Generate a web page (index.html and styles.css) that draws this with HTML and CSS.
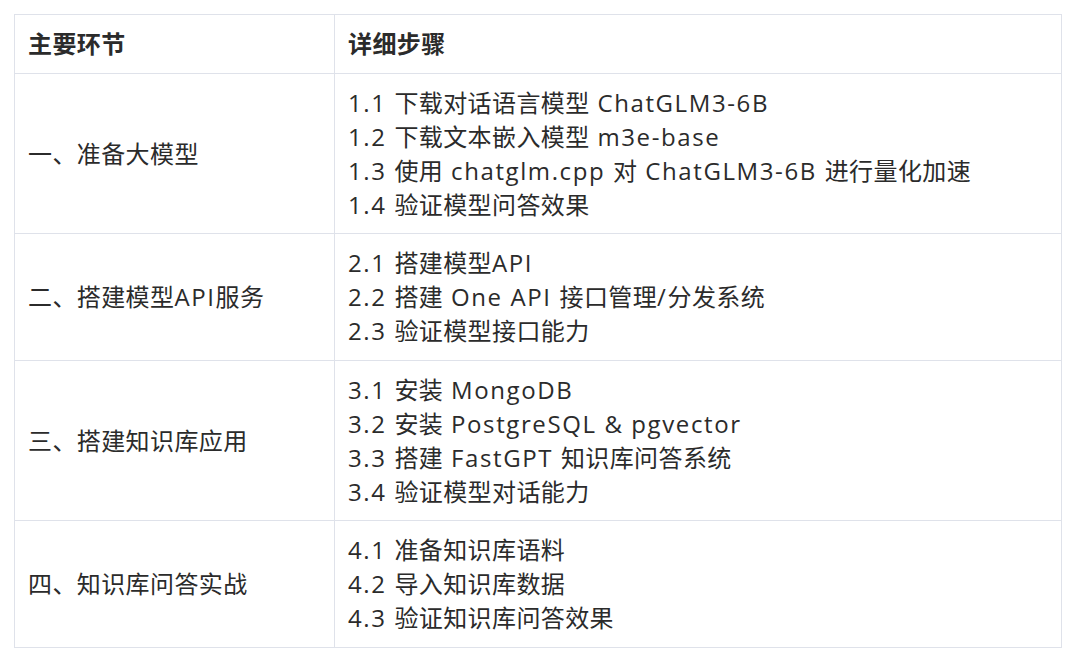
FILE: index.html
```html
<!DOCTYPE html>
<html lang="zh">
<head>
<meta charset="utf-8">
<link rel="stylesheet" href="styles.css">
</head>
<body>
<table class="plan">
  <colgroup><col class="c1"><col class="c2"></colgroup>
  <thead>
    <tr><th>主要环节</th><th>详细步骤</th></tr>
  </thead>
  <tbody>
    <tr>
      <td>一、准备大模型</td>
      <td><span class="en">1.1 </span>下载对话语言模型<span class="en"> ChatGLM3-6B</span><br><span class="en">1.2 </span>下载文本嵌入模型<span class="en"> m3e-base</span><br><span class="en">1.3 </span>使用<span class="en"> chatglm.cpp </span>对<span class="en"> ChatGLM3-6B </span>进行量化加速<br><span class="en">1.4 </span>验证模型问答效果</td>
    </tr>
    <tr>
      <td>二、搭建模型<span class="en">API</span>服务</td>
      <td><span class="en">2.1 </span>搭建模型<span class="en">API</span><br><span class="en">2.2 </span>搭建<span class="en"> One API </span>接口管理<span class="en">/</span>分发系统<br><span class="en">2.3 </span>验证模型接口能力</td>
    </tr>
    <tr>
      <td>三、搭建知识库应用</td>
      <td><span class="en">3.1 </span>安装<span class="en"> MongoDB</span><br><span class="en">3.2 </span>安装<span class="en"> PostgreSQL &amp; pgvector</span><br><span class="en">3.3 </span>搭建<span class="en"> FastGPT </span>知识库问答系统<br><span class="en">3.4 </span>验证模型对话能力</td>
    </tr>
    <tr>
      <td>四、知识库问答实战</td>
      <td><span class="en">4.1 </span>准备知识库语料<br><span class="en">4.2 </span>导入知识库数据<br><span class="en">4.3 </span>验证知识库问答效果</td>
    </tr>
  </tbody>
</table>
</body>
</html>
```

FILE: styles.css
```css
html, body {
  margin: 0;
  padding: 0;
  background: #ffffff;
}
body {
  padding: 14px 0 0 14px;
  font-family: "Open Sans", "Noto Sans CJK SC", sans-serif;
  color: #2b2b2b;
}
.plan {
  border-collapse: collapse;
  width: 1047px;
  table-layout: fixed;
  font-size: 24px;
  line-height: 34px;
  letter-spacing: 0.4px;
}
.c1 { width: 320px; }
.c2 { width: 727px; }
.plan th, .plan td {
  border: 1px solid #dfe2ea;
  padding: 12px 13px 11.5px;
  text-align: left;
  vertical-align: middle;
}
.plan th {
  font-weight: 700;
}
.en {
  letter-spacing: 1.6px;
}
```
